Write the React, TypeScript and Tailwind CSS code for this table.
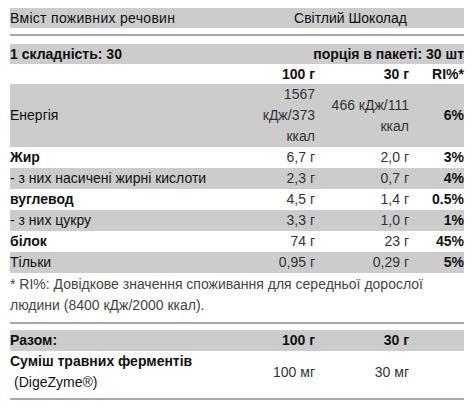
import React from "react";

type Row = { label: string; a: string; b: string; ri: string; bold?: boolean; gray?: boolean };

const rows: Row[] = [
  { label: "Жир", a: "6,7 г", b: "2,0 г", ri: "3%", bold: true },
  { label: "- з них насичені жирні кислоти", a: "2,3 г", b: "0,7 г", ri: "4%", gray: true },
  { label: "вуглевод", a: "4,5 г", b: "1,4 г", ri: "0.5%", bold: true },
  { label: "- з них цукру", a: "3,3 г", b: "1,0 г", ri: "1%", gray: true },
  { label: "білок", a: "74 г", b: "23 г", ri: "45%", bold: true },
  { label: "Тільки", a: "0,95 г", b: "0,29 г", ri: "5%", gray: true },
];

const grid = "grid grid-cols-[225px_80px_94px_55px] items-center";

export default function App() {
  return (
    <div
      className="w-[473px] h-[411px] bg-white pt-[8px] pl-[10px] text-[14px] text-[#111]"
      style={{ fontFamily: '"Liberation Sans", Arial, sans-serif' }}
    >
      <div className="w-[454px]">
        <div className="grid grid-cols-2 bg-[#cccccc] leading-[20px] h-[20px]">
          <div className="tracking-[0.3px]">Вміст поживних речовин</div>
          <div className="text-center">Світлий Шоколад</div>
        </div>
        <div className="mt-[6px] h-[2px] bg-[#a8a8a8]" />
        <div className="mt-[8px] flex justify-between bg-[#cccccc] font-bold leading-[20px] h-[20px]">
          <div>1 складність: 30</div>
          <div>порція в пакеті: 30 шт</div>
        </div>
        <div className={`${grid} font-bold leading-[20px] h-[20px]`}>
          <div />
          <div className="text-right">100 г</div>
          <div className="text-right">30 г</div>
          <div className="text-right">RI%*</div>
        </div>
        <div className={`${grid} bg-[#cccccc] leading-[21px] h-[63px]`}>
          <div>Енергія</div>
          <div className="text-right text-[#333]">1567 кДж/373 ккал</div>
          <div className="text-right text-[#333] pl-[14px]">466 кДж/111 ккал</div>
          <div className="text-right font-bold">6%</div>
        </div>
        {rows.map((r) => (
          <div
            key={r.label}
            className={`${grid} leading-[21px] h-[21px] ${r.gray ? "bg-[#cccccc]" : ""}`}
          >
            <div className={r.bold ? "font-bold" : ""}>{r.label}</div>
            <div className="text-right text-[#333]">{r.a}</div>
            <div className="text-right text-[#333]">{r.b}</div>
            <div className="text-right font-bold">{r.ri}</div>
          </div>
        ))}
        <div className="mt-[1px] leading-[21px] text-[#444]">
          * RI%: Довідкове значення споживання для середньої дорослої
          <br />
          людини (8400 кДж/2000 ккал).
        </div>
        <div className="mt-[6px] h-[2px] bg-[#a8a8a8]" />
        <div className={`${grid} mt-[6px] bg-[#cccccc] font-bold leading-[21px] h-[21px]`}>
          <div>Разом:</div>
          <div className="text-right">100 г</div>
          <div className="text-right">30 г</div>
          <div />
        </div>
        <div className={`${grid} leading-[21px] h-[42px]`}>
          <div>
            <div className="font-bold">Суміш травних ферментів</div>
            <div className="pl-[4px]">(DigeZyme®)</div>
          </div>
          <div className="text-right text-[#333]">100 мг</div>
          <div className="text-right text-[#333]">30 мг</div>
          <div />
        </div>
        <div className="mt-[5px] h-[2px] bg-[#a8a8a8]" />
      </div>
    </div>
  );
}
